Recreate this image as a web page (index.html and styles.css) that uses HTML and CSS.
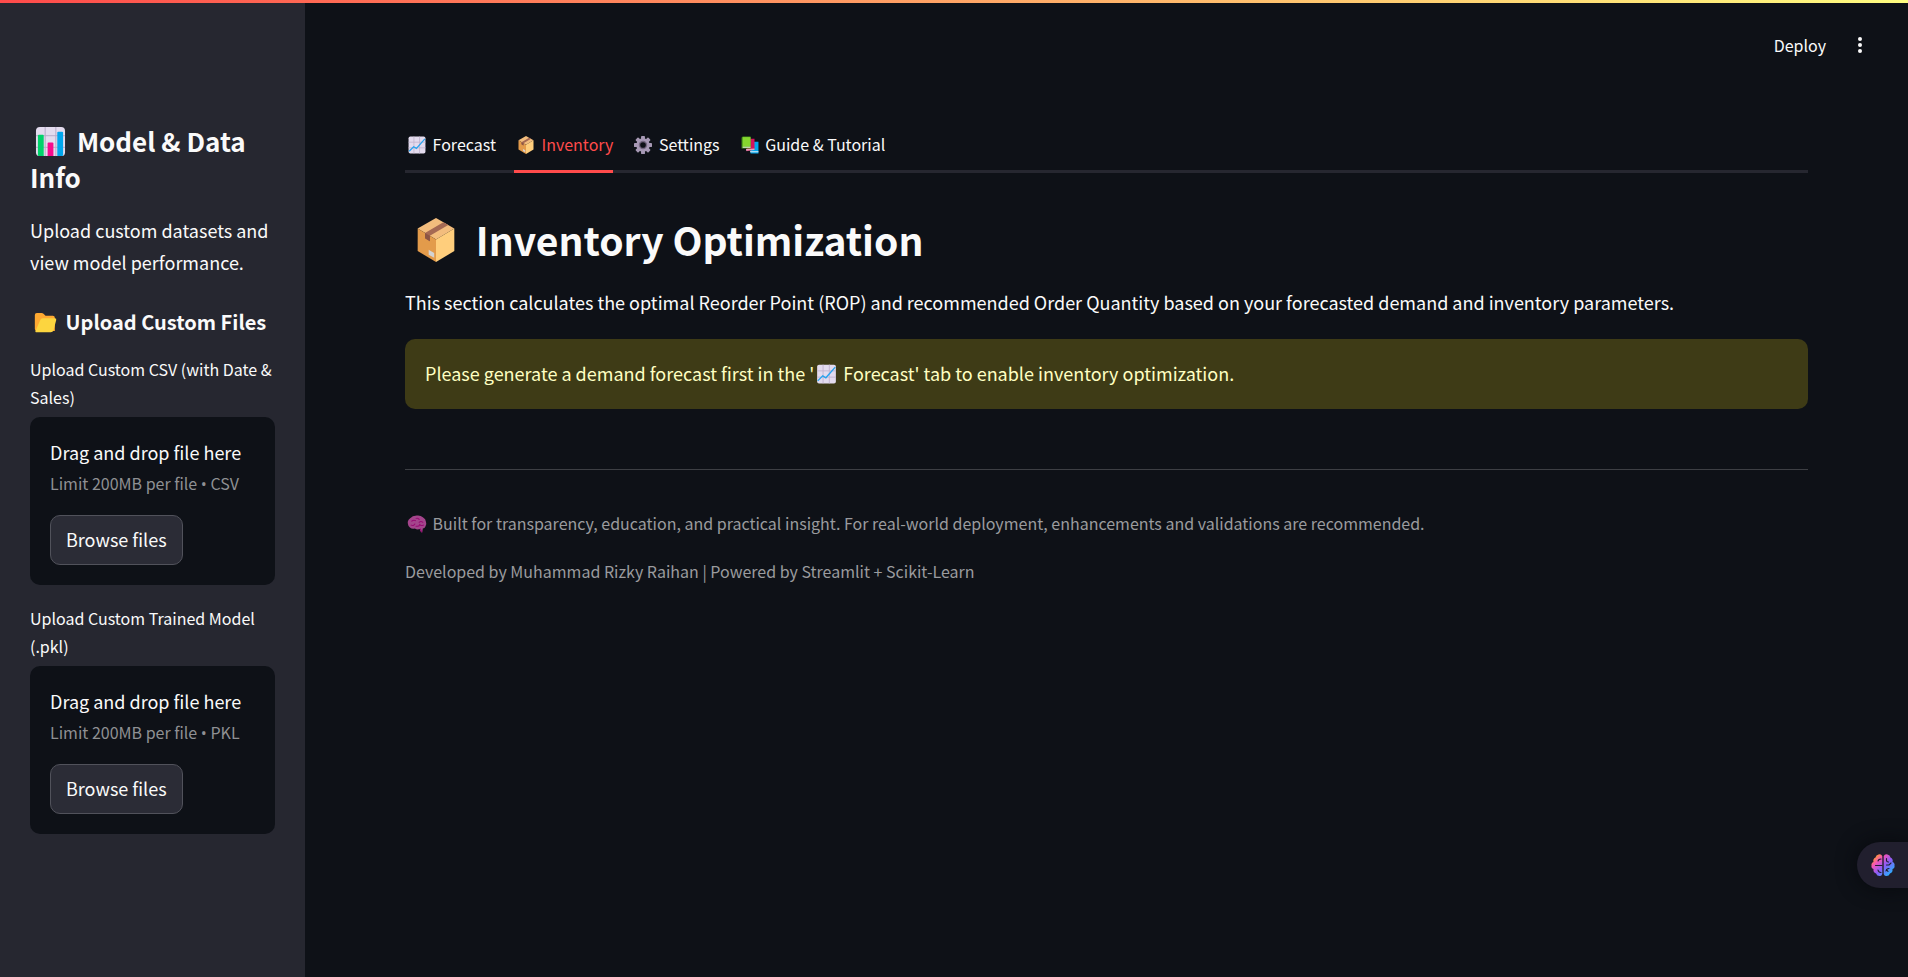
FILE: index.html
```html
<!DOCTYPE html>
<html lang="en">
<head>
<meta charset="utf-8">
<title>Inventory Optimization</title>
<link rel="stylesheet" href="styles.css">
</head>
<body>
<svg class="defs" aria-hidden="true">
  <defs>
    <symbol id="line-chart" viewBox="0 0 32 32">
      <rect x="1" y="1" width="30" height="30" rx="3" fill="#e3dbee"/>
      <path d="M10.500 1v30M20.500 1v30M1 11h30M1 21h30" stroke="#c2b4d0" stroke-width="1.500"/>
      <path d="M2 27l8-8 5 3L30 5" fill="none" stroke="#26a3ee" stroke-width="2.200"/>
    </symbol>
    <symbol id="bar-chart" viewBox="0 0 32 32">
      <rect x="1" y="1" width="30" height="30" rx="4" fill="#e3dbee"/>
      <path d="M10.500 1v30M21.500 1v30M1 10h30M1 22h30" stroke="#b6a9c6" stroke-width="1"/>
      <path d="M3 10q0-1 1-1h4q1 0 1 1v21H4q-1 0-1-1z" fill="#00d26a"/>
      <path d="M13 18q0-1 1-1h4q1 0 1 1v13h-6z" fill="#f70a8d"/>
      <path d="M23 7q0-1 1-1h4q1 0 1 1v23q0 1-1 1h-5z" fill="#00a6ed"/>
    </symbol>
    <symbol id="package" viewBox="0 0 32 36">
      <path d="M16 0l15 8.500-15 9-15-9z" fill="#f3bd7d"/>
      <path d="M1 8.500l15 9V36L1 27z" fill="#e39b4b"/>
      <path d="M31 8.500l-15 9V36l15-9z" fill="#ffce7c"/>
      <path d="M22 3.500l4 2.200-15 8.800v4.500l-4-2.400v-4.300z" fill="#a56953"/>
      <path d="M7 12.300l4 2.200v4.500l-4-2.400z" fill="#8c5543"/>
      <path d="M10 26l4.500 2.600v4L10 30z" fill="#d3d3d3"/>
    </symbol>
    <symbol id="gear" viewBox="0 0 32 32">
      <g fill="#a799b5">
        <rect x="12.500" y="0" width="7" height="32" rx="1.500"/>
        <rect x="0" y="12.500" width="32" height="7" rx="1.500"/>
        <rect x="12.500" y="0" width="7" height="32" rx="1.500" transform="rotate(45 16 16)"/>
        <rect x="12.500" y="0" width="7" height="32" rx="1.500" transform="rotate(-45 16 16)"/>
        <circle cx="16" cy="16" r="12"/>
      </g>
      <circle cx="16" cy="16" r="7.500" fill="#73667f"/>
      <circle cx="16" cy="16" r="5" fill="#0e1117"/>
    </symbol>
    <symbol id="books" viewBox="0 0 32 32">
      <path d="M16 10h15v21H17z" fill="#00a6ed"/>
      <path d="M16 27h15v2H16z" fill="#d4e9f5"/>
      <path d="M10 5h14v19l-14 3z" fill="#d4125d"/>
      <path d="M9 23l15-1v3l-15 1z" fill="#e6a5bd"/>
      <path d="M1 3l2-2h14v21H1z" fill="#44911b"/>
      <path d="M3 2h14v17H3z" fill="#86d72f"/>
      <path d="M3 19h14v2H3z" fill="#d9e8cd"/>
    </symbol>
    <symbol id="folder" viewBox="0 0 34 30">
      <path d="M1 3q0-3 3-3h7q2 0 3 1l3 3h11q3 0 3 3v20H4q-3 0-3-3z" fill="#ffa931"/>
      <path d="M9 11q1-3 4-3h18q3 0 2 3l-4 15q-1 3-4 3H3q-2 0-1-2z" fill="#fcd53f"/>
    </symbol>
    <symbol id="brain" viewBox="-4 0 39 32" preserveAspectRatio="none">
      <path d="M1 17Q-1 10 4 6 8 1 15 1 21 0 25 4q5 3 5 8 2 5-1 9-1 3-4 3l-1 7q-3 0-4-6-4 2-8-1-5 1-8-2-3-2-3-5z" fill="#a4458c"/>
      <path d="M7 11q3-3 6-1M14 6q4-1 5 2M19 13q3-3 6 0M6 18q4 2 6-2M14 20q5 1 6-3 3 3 6 1M21 25l2 5" fill="none" stroke="#980b72" stroke-width="1.800" stroke-linecap="round"/>
    </symbol>
  </defs>
</svg>

<div class="decoration"></div>
<div class="app">
  <aside class="sidebar">
    <h2 class="side-title"><svg class="emoji emoji-h2" role="img" aria-label="Bar chart"><use href="#bar-chart"/></svg> Model &amp; Data Info</h2>
    <p class="side-text">Upload custom datasets and view model performance.</p>
    <h3 class="side-subtitle"><svg class="emoji emoji-h3" role="img" aria-label="Folder"><use href="#folder"/></svg> Upload Custom Files</h3>

    <div class="uploader">
      <label class="uploader-label" for="csv-button">Upload Custom CSV (with Date &amp; Sales)</label>
      <div class="dropzone">
        <div class="drop-title">Drag and drop file here</div>
        <div class="drop-limit">Limit 200MB per file <span class="bullet">•</span> CSV</div>
        <button class="browse" id="csv-button" type="button">Browse files</button>
      </div>
    </div>
    <div class="uploader">
      <label class="uploader-label" for="pkl-button">Upload Custom Trained Model (.pkl)</label>
      <div class="dropzone">
        <div class="drop-title">Drag and drop file here</div>
        <div class="drop-limit">Limit 200MB per file <span class="bullet">•</span> PKL</div>
        <button class="browse" id="pkl-button" type="button">Browse files</button>
      </div>
    </div>
  </aside>

  <div class="page">
    <header class="toolbar">
      <button class="deploy" type="button">Deploy</button>
      <button class="menu" type="button" aria-label="Main menu">
        <svg class="menu-dots" viewBox="0 0 6 18"><circle cx="3" cy="3" r="2"/><circle cx="3" cy="9" r="2"/><circle cx="3" cy="15" r="2"/></svg>
      </button>
    </header>
    <main class="content">
      <div class="tabs" role="tablist">
        <button class="tab" role="tab" type="button"><svg class="emoji emoji-small" aria-hidden="true"><use href="#line-chart"/></svg> Forecast</button>
        <button class="tab tab-active" role="tab" type="button" aria-selected="true"><svg class="emoji emoji-small" aria-hidden="true"><use href="#package"/></svg> Inventory</button>
        <button class="tab" role="tab" type="button"><svg class="emoji emoji-small" aria-hidden="true"><use href="#gear"/></svg> Settings</button>
        <button class="tab" role="tab" type="button"><svg class="emoji emoji-small" aria-hidden="true"><use href="#books"/></svg> Guide &amp; Tutorial</button>
      </div>
      <h1 class="title"><svg class="emoji emoji-h1" role="img" aria-label="Package"><use href="#package"/></svg> Inventory Optimization</h1>
      <p class="lead">This section calculates the optimal Reorder Point (ROP) and recommended Order Quantity based on your forecasted demand and inventory parameters.</p>
      <div class="alert" role="alert">Please generate a demand forecast first in the '<svg class="emoji emoji-body" role="img" aria-label="Chart"><use href="#line-chart"/></svg> Forecast' tab to enable inventory optimization.</div>
      <hr class="divider">
      <footer class="captions">
        <p class="caption"><svg class="emoji emoji-small" role="img" aria-label="Brain"><use href="#brain"/></svg> Built for transparency, education, and practical insight. For real-world deployment, enhancements and validations are recommended.</p>
        <p class="caption">Developed by Muhammad Rizky Raihan | Powered by Streamlit + Scikit-Learn</p>
      </footer>
    </main>
  </div>
</div>

<button class="assistant" type="button" aria-label="Assistant">
  <svg class="assistant-icon" viewBox="0 0 24 24">
    <defs>
      <linearGradient id="brain-gradient" x1="0" y1="0" x2="1" y2="1">
        <stop offset=".1" stop-color="#ffa51f"/><stop offset=".3" stop-color="#f553b8"/><stop offset=".55" stop-color="#8b5cf6"/><stop offset=".9" stop-color="#1fb6ff"/>
      </linearGradient>
    </defs>
    <path d="M11.300 3Q10 .5 7.500 1.500 5 2 4.500 4.500 1.500 6 2.500 9 0 10 .5 12.500 0 15 2.500 16 2 19.500 5 20.500 6 23 8.500 23 10.500 23.500 11.300 21z M12.700 3Q14 .5 16.500 1.500 19 2 19.500 4.500 22.500 6 21.500 9 24 10 23.500 12.500 24 15 21.500 16 22 19.500 19 20.500 18 23 15.500 23 13.500 23.500 12.700 21z" fill="url(#brain-gradient)"/>
    <path d="M4.500 12.500h6.500M7 8q.5-2 3-2M7 17q.5 2.500 3 2.500M15.500 5.500v2q0 1.500 2 1.500M15.500 12h2.500l2-2M15 18q.5-2.500 3-2.500M17 18.500l-1.500-2" fill="none" stroke="#211f2e" stroke-width="1.100" stroke-linecap="round"/>
  </svg>
</button>
</body>
</html>
```

FILE: styles.css
```css
* {
  box-sizing: border-box;
}

body {
  margin: 0;
  background: #0e1117;
  color: #fafafa;
  font-family: "Noto Sans CJK SC", "Noto Sans", sans-serif;
  font-size: 18px;
  line-height: 32px;
}

h1, h2, h3, p {
  margin: 0;
}

button {
  font: inherit;
  color: inherit;
  border: 0;
  padding: 0;
  background: none;
  cursor: pointer;
}

.defs {
  position: absolute;
  width: 0;
  height: 0;
}

.decoration {
  position: absolute;
  top: 0;
  left: 0;
  right: 0;
  height: 3px;
  background: linear-gradient(90deg, #ff4b4b, #fffd80);
}

.app {
  display: flex;
  min-height: 100vh;
}

/* Sidebar */

.sidebar {
  flex: 0 0 305px;
  padding: 123px 30px 30px;
  background: #262730;
}

.side-title {
  font-size: 26px;
  line-height: 36px;
  font-weight: 600;
  margin-bottom: 19px;
}

.side-text {
  margin-bottom: 30px;
}

.side-subtitle {
  font-size: 20px;
  line-height: 28px;
  font-weight: 600;
  margin-bottom: 19px;
}

.uploader {
  margin-bottom: 19px;
}

.uploader-label {
  display: block;
  font-size: 16px;
  line-height: 28px;
  margin-bottom: 6px;
}

.dropzone {
  padding: 19px 20px 20px;
  border-radius: 10px;
  background: #0e1117;
}

.drop-title {
  margin-bottom: 1px;
}

.drop-limit {
  font-size: 16px;
  line-height: 28px;
  color: #8f9093;
}

.bullet {
  font-family: "Open Sans", "Noto Sans", sans-serif;
  line-height: 1;
}

.browse {
  display: block;
  height: 50px;
  margin-top: 18px;
  padding: 0 15px 2px;
  border: 1px solid #51525b;
  border-radius: 10px;
  background: #2b2c36;
}

/* Main area */

.page {
  flex: 1;
  min-width: 0;
}

.toolbar {
  display: flex;
  justify-content: flex-end;
  align-items: center;
  gap: 31px;
  height: 75px;
  padding: 14px 45px 0 0;
  font-size: 16px;
}

.menu-dots {
  display: block;
  width: 6px;
  height: 18px;
  fill: #fafafa;
}

.content {
  padding: 45px 100px;
}

.tabs {
  display: flex;
  gap: 18px;
  border-bottom: 3px solid #262730;
  margin-bottom: 33px;
}

.tab {
  height: 53px;
  margin-bottom: -3px;
  padding-bottom: 2px;
  border-bottom: 3px solid transparent;
  font-size: 16px;
  white-space: nowrap;
}

.tab-active {
  color: #ff4b4b;
  border-bottom-color: #ff4b4b;
}

.title {
  font-size: 39px;
  line-height: 66px;
  font-weight: 600;
  margin-bottom: 14px;
}

.lead {
  margin-bottom: 21px;
}

.alert {
  padding: 18px 20px 20px;
  border-radius: 10px;
  background: #3e3b16;
  color: #ffffc2;
}

.divider {
  height: 1px;
  margin: 60px 0 39px;
  border: 0;
  background: #3d3f44;
}

.captions {
  display: grid;
  gap: 20px;
}

.caption {
  font-size: 16px;
  line-height: 28px;
  color: #9a9b9e;
}

/* Inline pictograms */

.emoji {
  display: inline-block;
}

.emoji-small {
  width: 24px;
  height: 18px;
  vertical-align: -3px;
}

.emoji-body {
  width: 25px;
  height: 20px;
  vertical-align: -3px;
}

.emoji-h3 {
  width: 31px;
  height: 20px;
  vertical-align: -3px;
}

.emoji-h2 {
  width: 41px;
  height: 31px;
  vertical-align: -5px;
}

.emoji-h1 {
  width: 62px;
  height: 44px;
  vertical-align: -6px;
}

/* Docked assistant button */

.assistant {
  position: fixed;
  right: 0;
  top: 842px;
  width: 51px;
  height: 46px;
  padding-left: 14px;
  border-radius: 23px 0 0 23px;
  background: #211f2e;
  box-shadow: 0 0 20px #07090d;
}

.assistant-icon {
  display: block;
  width: 24px;
  height: 24px;
}
```
